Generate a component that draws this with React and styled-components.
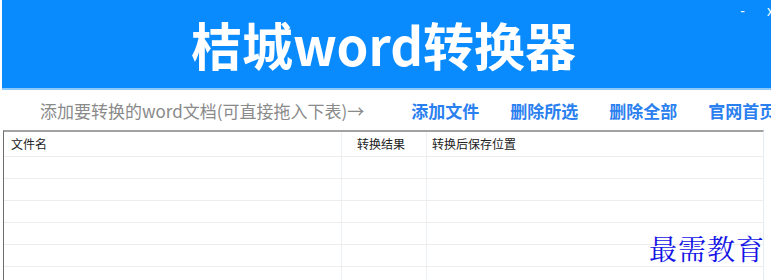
import React from 'react'
import styled, { createGlobalStyle } from 'styled-components'

const GlobalStyle = createGlobalStyle`
  html, body {
    margin: 0;
    padding: 0;
    background: #ffffff;
  }
  body {
    font-family: "Microsoft YaHei", "Noto Sans CJK SC", "Noto Sans", sans-serif;
  }
`

const Window = styled.div`
  position: relative;
  width: 771px;
  height: 280px;
  overflow: hidden;
  background: #ffffff;
`

const Banner = styled.header`
  position: relative;
  margin-left: 2px;
  height: 90px;
  box-sizing: border-box;
  background: #0a8bfd;
  border-bottom: 2px solid #8fcaff;
  display: flex;
  align-items: center;
  justify-content: center;
`

const Title = styled.h1`
  margin: 0 6px 0 0;
  color: #ffffff;
  font-size: 51px;
  font-weight: 700;
  line-height: 1;
`

const WinButtons = styled.div`
  position: absolute;
  top: 3px;
  right: -3px;
  display: flex;
  gap: 22px;
  color: #ffffff;
  font-size: 14px;
  font-family: "Liberation Sans", sans-serif;
`

const Toolbar = styled.nav`
  height: 40px;
  display: flex;
  align-items: center;
  padding-left: 40px;
  white-space: nowrap;
`

const Hint = styled.span`
  color: #8a8a8a;
  font-size: 17px;
  margin-right: 47px;
`

const Action = styled.a`
  color: #2a80ef;
  font-size: 17px;
  font-weight: 700;
  margin-right: 31px;
  text-decoration: none;
  cursor: pointer;
`

const Table = styled.div`
  margin-left: 3px;
  width: 759px;
  border-top: 2px solid #a2a2a2;
  border-left: 1px solid #6e6e6e;
  border-right: 1px solid #e4ecf4;
  display: grid;
  grid-template-columns: 338px 85px 1fr;
  grid-auto-rows: 22px;
  grid-template-rows: 25px;
`

const Cell = styled.div`
  border-bottom: 1px solid #ededed;
  border-right: ${p => (p.last ? 'none' : '1px solid #ebf0f5')};
  font-size: 12px;
  color: #222222;
  display: flex;
  align-items: center;
  padding-left: ${p => p.pad || 7}px;
  padding-bottom: 2px;
  box-sizing: border-box;
`

const Watermark = styled.div`
  position: absolute;
  left: 649px;
  top: 228px;
  color: #1414e6;
  font-size: 28px;
  font-family: "AR PL UKai CN", "KaiTi", "Noto Serif CJK SC", serif;
  letter-spacing: 1px;
`

const columns = [
  { title: '文件名', pad: 7 },
  { title: '转换结果', pad: 15 },
  { title: '转换后保存位置', pad: 5 }
]

const rows = Array.from({ length: 6 })

export default function App () {
  return (
    <Window>
      <GlobalStyle />
      <Banner>
        <Title>桔城word转换器</Title>
        <WinButtons>
          <span>-</span>
          <span>x</span>
        </WinButtons>
      </Banner>
      <Toolbar>
        <Hint>添加要转换的word文档(可直接拖入下表)→</Hint>
        <Action>添加文件</Action>
        <Action>删除所选</Action>
        <Action>删除全部</Action>
        <Action>官网首页</Action>
      </Toolbar>
      <Table>
        {columns.map((c, i) => (
          <Cell key={c.title} pad={c.pad} last={i === columns.length - 1}>{c.title}</Cell>
        ))}
        {rows.map((_, r) => columns.map((c, i) => (
          <Cell key={r + '-' + i} last={i === columns.length - 1} />
        )))}
      </Table>
      <Watermark>最需教育</Watermark>
    </Window>
  )
}
